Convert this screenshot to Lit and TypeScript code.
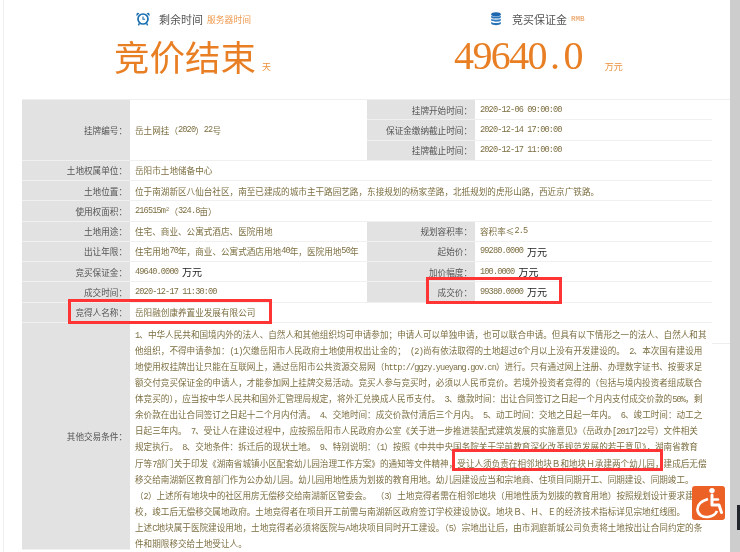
import { LitElement, html, css } from 'lit';
import { customElement } from 'lit/decorators.js';

// latin runs are squeezed to half an em, the way the page's font does half width glyphs
const mixed = (text: string) =>
  text.split(/([\x20-\x7e²]+)/).map((part, i) => (i % 2 ? html`<span class="en">${part}</span>` : part));

const TERMS = [
  '1、中华人民共和国境内外的法人、自然人和其他组织均可申请参加；申请人可以单独申请，也可以联合申请。但具有以下情形之一的法人、自然人和其',
  '他组织，不得申请参加：(1)欠缴岳阳市人民政府土地使用权出让金的； (2)尚有依法取得的土地超过6个月以上没有开发建设的。 2、本次国有建设用',
  '地使用权挂牌出让只能在互联网上，通过岳阳市公共资源交易网（http://ggzy.yueyang.gov.cn）进行。只有通过网上注册、办理数字证书、按要求足',
  '额交付竞买保证金的申请人，才能参加网上挂牌交易活动。竞买人参与竞买时，必须以人民币竞价。若境外投资者竞得的（包括与境内投资者组成联合',
  '体竞买的），应当按中华人民共和国外汇管理局规定，将外汇兑换成人民币支付。 3、缴款时间：出让合同签订之日起一个月内支付成交价款的50%，剩',
  '余价款在出让合同签订之日起十二个月内付清。 4、交地时间：成交价款付清后三个月内。 5、动工时间：交地之日起一年内。 6、竣工时间：动工之',
  '日起三年内。 7、受让人在建设过程中，应按照岳阳市人民政府办公室《关于进一步推进装配式建筑发展的实施意见》（岳政办[2017]22号）文件相关',
  '规定执行。 8、交地条件：拆迁后的现状土地。 9、特别说明：（1）按照《中共中央国务院关于学前教育深化改革规范发展的若干意见》，湖南省教育',
  '厅等7部门关于印发《湖南省城镇小区配套幼儿园治理工作方案》的通知等文件精神，受让人须负责在相邻地块Ｂ和地块Ｈ承建两个幼儿园，建成后无偿',
  '移交给南湖新区教育部门作为公办幼儿园。幼儿园用地性质为划拨的教育用地。幼儿园建设应当和宗地商、住项目同期开工、同期建设、同期竣工。',
  '（2）上述所有地块中的社区用房无偿移交给南湖新区管委会。 （3）土地竞得者需在相邻E地块（用地性质为划拨的教育用地）按照规划设计要求建设学',
  '校，竣工后无偿移交属地政府。土地竞得者在项目开工前需与南湖新区政府签订学校建设协议。地块Ｂ、Ｈ、Ｅ的经济技术指标详见宗地红线图。 （4）',
  '上述C地块属于医院建设用地，土地竞得者必须将医院与A地块项目同时开工建设。（5）宗地出让后，由市洞庭新城公司负责将土地按出让合同约定的条',
  '件和期限移交给土地受让人。',
];

@customElement('app-root')
export class AppRoot extends LitElement {
  static styles = css`
    :host {
      display: block;
      position: relative;
      width: 740px;
      height: 552px;
      overflow: hidden;
      background: #fff;
      font-family: 'Noto Sans CJK SC', 'Liberation Sans', sans-serif;
      font-size: 8.6px;
      color: #7d6f42;
      filter: blur(0.3px);
    }
    .page {
      display: flex;
      height: 100%;
    }
    .main {
      width: 708px;
      margin-left: 3px;
      padding-left: 18px;
      border-left: 1px solid #f1f1f1;
    }
    .band {
      width: 10px;
      background: #cdcdcd;
    }

    .head {
      display: grid;
      grid-template-columns: 345px 345px;
      height: 99px;
    }
    .left-side {
      padding-left: 92px;
    }
    .right-side {
      padding-left: 87px;
    }
    .title {
      display: flex;
      align-items: center;
      height: 22px;
      padding-top: 8px;
      color: #555;
      font-size: 11px;
    }
    .left-side .title {
      padding-left: 22px;
    }
    .right-side .title {
      padding-left: 37px;
    }
    .title svg {
      display: block;
    }
    .left-side .title svg {
      margin-right: 9px;
    }
    .right-side .title svg {
      margin-right: 11px;
    }
    .hint {
      margin-left: 4px;
      color: #ef9a50;
      font-size: 8.8px;
    }
    .rmb {
      margin-left: 4px;
      color: #eeb27f;
      font-family: 'Liberation Mono', monospace;
      font-size: 7.6px;
      font-weight: 700;
    }
    .big {
      display: flex;
      align-items: flex-end;
      height: 44px;
      margin-top: 4px;
      color: #e97f24;
    }
    .ended {
      font-size: 35.5px;
      line-height: 44px;
    }
    .price {
      font-family: 'Liberation Serif', serif;
      font-size: 40px;
      line-height: 44px;
      letter-spacing: -1.6px;
    }
    .dot {
      margin: 0 5px 0 4px;
    }
    .unit {
      color: #ec903e;
      font-size: 9px;
      line-height: 14px;
      margin-bottom: 4px;
    }
    .left-side .unit {
      margin-left: 6px;
    }
    .right-side .unit {
      margin-left: 23px;
    }

    .grid {
      display: grid;
      grid-template-columns: 108px 237px 108px 237px;
      grid-auto-rows: 20.25px;
      border-top: 1px solid #eee;
      border-bottom: 1px solid #eee;
    }
    .lab,
    .val {
      display: flex;
      align-items: center;
      border-bottom: 1px solid #f0f0f0;
      white-space: nowrap;
      box-sizing: border-box;
    }
    .lab {
      justify-content: flex-end;
      padding-right: 3px;
      background: #e2e2e2;
      color: #555;
    }
    .val {
      padding-left: 5px;
      background: #fff;
    }
    .span-3 {
      grid-row: span 3;
    }
    .wide {
      grid-column: span 3;
    }
    .sub {
      display: grid;
      grid-column: span 2;
      grid-row: span 3;
      grid-template-columns: 108px 237px;
      grid-auto-rows: 20.25px;
    }
    .terms-lab,
    .terms {
      height: 227px;
    }
    .terms {
      display: block;
      padding-top: 3px;
      border-bottom: 0;
    }
    .terms div {
      height: 16.1px;
      line-height: 16.1px;
    }
    .en {
      font-family: 'Liberation Mono', monospace;
      letter-spacing: -0.86px;
    }
    .wan {
      margin-left: 4px;
      color: #222;
      font-size: 10px;
    }

    .mark {
      position: absolute;
      box-sizing: border-box;
      border: 3px solid #ff3535;
    }
    .mark-buyer {
      left: 68px;
      top: 299px;
      width: 204px;
      height: 25px;
    }
    .mark-price {
      left: 426px;
      top: 277px;
      width: 136px;
      height: 27px;
    }
    .mark-school {
      left: 452px;
      top: 449px;
      width: 211px;
      height: 22px;
    }
    .access {
      position: absolute;
      left: 692px;
      top: 486px;
      display: block;
      width: 33px;
      height: 34px;
      border-radius: 3px;
      background: #ec6126;
    }
    .sliver {
      position: absolute;
      left: 737px;
      top: 505px;
      width: 3px;
      height: 25px;
      background: #23262c;
    }
  `;

  cell(label: string, value: unknown) {
    return html`<div class="lab">${label}</div><div class="val">${value}</div>`;
  }

  wan(amount: string) {
    return html`${mixed(amount)}<span class="wan">万元</span>`;
  }

  render() {
    return html`
      <div class="page">
        <div class="main">
          <div class="head">
            <div class="left-side">
              <div class="title">
                <svg width="14" height="14" viewBox="0 0 14 14">
                  <path d="M.6 4.2 3.4 1.2 1.4.7.4 2zM13.4 4.2 10.6 1.2 12.6.7 13.6 2z" fill="#1a6fb0" />
                  <circle cx="7" cy="7" r="5" fill="none" stroke="#1a6fb0" stroke-width="1.7" />
                  <path d="M7 4.4V7.3H9.2" fill="none" stroke="#1a6fb0" stroke-width="1.1" />
                  <path d="M3.4 11.4 2.4 13.4M10.6 11.4 11.6 13.4" stroke="#1a6fb0" stroke-width="1.4" />
                </svg>
                <span>剩余时间</span><span class="hint">服务器时间</span>
              </div>
              <div class="big">
                <span class="ended">竞价结束</span><span class="unit">天</span>
              </div>
            </div>
            <div class="right-side">
              <div class="title">
                <svg width="10" height="14" viewBox="0 0 10 14">
                  <ellipse cx="5" cy="2.2" rx="4.8" ry="2" fill="#1c66ad" />
                  <path d="M.2 3.4C1 5 9 5 9.8 3.4V5.4C9 7 1 7 .2 5.4Z" fill="#2a74b8" />
                  <path d="M.2 6.6C1 8.2 9 8.2 9.8 6.6V8.6C9 10.2 1 10.2 .2 8.6Z" fill="#2f7cc0" />
                  <path d="M.2 9.8C1 11.4 9 11.4 9.8 9.8V11.8C9 13.6 1 13.6 .2 11.8Z" fill="#2a74b8" />
                </svg>
                <span>竞买保证金</span><span class="rmb">RMB</span>
              </div>
              <div class="big">
                <span class="price">49640<span class="dot">.</span>0</span><span class="unit">万元</span>
              </div>
            </div>
          </div>

          <div class="grid">
            <div class="lab span-3">挂牌编号：</div>
            <div class="val span-3">${mixed('岳土网挂（2020）22号')}</div>
            <div class="sub">
              ${this.cell('挂牌开始时间：', mixed('2020-12-06 09:00:00'))}
              ${this.cell('保证金缴纳截止时间：', mixed('2020-12-14 17:00:00'))}
              ${this.cell('挂牌截止时间：', mixed('2020-12-17 11:00:00'))}
            </div>
            <div class="lab">土地权属单位：</div>
            <div class="val wide">岳阳市土地储备中心</div>
            <div class="lab">土地位置：</div>
            <div class="val wide">位于南湖新区八仙台社区，南至已建成的城市主干路园艺路，东接规划的杨家垄路，北抵规划的虎形山路，西近京广铁路。</div>
            <div class="lab">使用权面积：</div>
            <div class="val wide">${mixed('216515m²（324.8亩）')}</div>
            ${this.cell('土地用途：', '住宅、商业、公寓式酒店、医院用地')}
            ${this.cell('规划容积率：', mixed('容积率≤2.5'))}
            ${this.cell('出让年限：', mixed('住宅用地70年，商业、公寓式酒店用地40年，医院用地50年'))}
            ${this.cell('起始价：', this.wan('99280.0000'))}
            ${this.cell('竞买保证金：', this.wan('49640.0000'))}
            ${this.cell('加价幅度：', this.wan('100.0000'))}
            ${this.cell('成交时间：', mixed('2020-12-17 11:30:00'))}
            ${this.cell('成交价：', this.wan('99380.0000'))}
            <div class="lab">竞得人名称：</div>
            <div class="val wide">岳阳融创康养置业发展有限公司</div>
            <div class="lab terms-lab">其他交易条件：</div>
            <div class="val wide terms">
              ${TERMS.map((line) => html`<div>${mixed(line)}</div>`)}
            </div>
          </div>
        </div>
        <div class="band"></div>
      </div>

      <div class="mark mark-buyer"></div>
      <div class="mark mark-price"></div>
      <div class="mark mark-school"></div>
      <svg class="access" viewBox="0 0 33 34">
        <circle cx="20" cy="4.6" r="2.7" fill="#fff" />
        <path d="M20 9V19H27L29.5 26.5" fill="none" stroke="#fff" stroke-width="3" stroke-linecap="round" stroke-linejoin="round" />
        <path d="M20 13.5H26" stroke="#fff" stroke-width="2.4" stroke-linecap="round" />
        <path d="M16 13C9.5 15 5 19 5.5 24 6 29 11 31.5 16 31 20 30.5 23.5 28.5 25 25" fill="none" stroke="#fff" stroke-width="2.6" />
      </svg>
      <div class="sliver"></div>
    `;
  }
}
